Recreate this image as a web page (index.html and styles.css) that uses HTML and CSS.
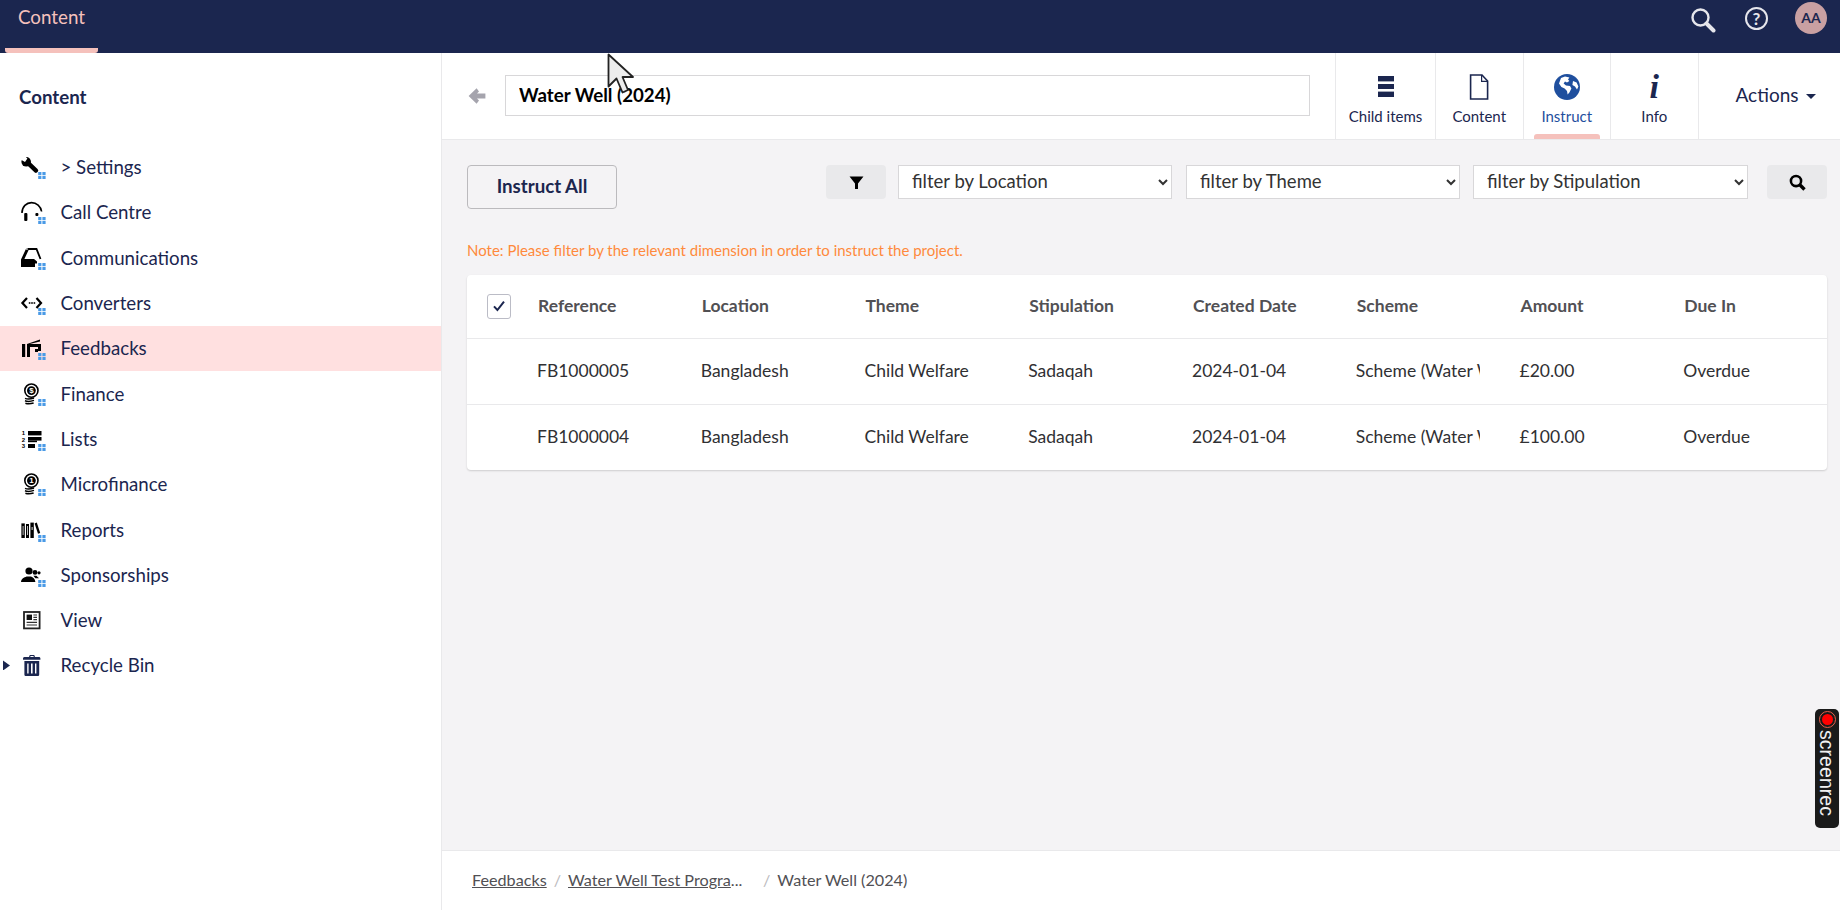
FILE: index.html
```html
<!DOCTYPE html>
<html lang="en">
<head>
    <meta charset="UTF-8">
    <title>Water Well (2024) - Content</title>
    <link rel="stylesheet" href="styles.css">
</head>
<body>
    <svg class="sprite" aria-hidden="true">
        <symbol id="dots" viewBox="0 0 26 24">
            <rect x="18.2" y="17" width="3.2" height="3.2" fill="#4a9ae6"/>
            <rect x="22.4" y="17" width="3.2" height="3.2" fill="#4a9ae6"/>
            <rect x="18.2" y="21" width="3.2" height="3" fill="#4a9ae6"/>
            <rect x="22.4" y="21" width="3.2" height="3" fill="#4a9ae6"/>
        </symbol>
    </svg>

    <header class="topbar">
        <div class="topbar-tab">Content</div>
        <div class="topbar-tools">
            <svg class="tool-search" viewBox="0 0 26 26" fill="none" stroke="#e6e6ec">
                <circle cx="10.5" cy="10.5" r="8" stroke-width="2.4"/>
                <path d="M16.5 16.5L23.5 23.5" stroke-width="4" stroke-linecap="round"/>
            </svg>
            <div class="tool-help">?</div>
            <div class="tool-avatar">AA</div>
        </div>
    </header>

    <div class="layout">
        <aside class="sidebar">
            <h2 class="sidebar-title">Content</h2>
            <ul class="tree">
                <li class="tree-item">
                    <span class="tree-caret"></span>
                    <svg class="tree-icon" viewBox="0 0 26 24">
                        <circle cx="6.2" cy="6.8" r="4.8"/>
                        <path d="M6.6 6.6L16 15.6" stroke="#000" stroke-width="4.4" stroke-linecap="round"/>
                        <path d="M0.6 4.4L5 7L7.4 3.4L4.4 0.6Z" fill="#fff"/>
                        <use href="#dots"/>
                    </svg>
                    <span class="tree-label">&gt; Settings</span>
                </li>
                <li class="tree-item">
                    <span class="tree-caret"></span>
                    <svg class="tree-icon" viewBox="0 0 26 24">
                        <path d="M2 13C2 6.5 6.5 2.6 11.5 2.6C16.5 2.6 20.8 6.2 21.6 11.5" fill="none" stroke="#000" stroke-width="1.6"/>
                        <rect x="4.2" y="13" width="3.2" height="8" rx="1"/>
                        <rect x="15.4" y="13" width="3" height="3" rx="1"/>
                        <use href="#dots"/>
                    </svg>
                    <span class="tree-label">Call Centre</span>
                </li>
                <li class="tree-item">
                    <span class="tree-caret"></span>
                    <svg class="tree-icon" viewBox="0 0 26 24">
                        <path d="M7.5 3H16.5L20.5 13" fill="none" stroke="#000" stroke-width="1.8"/>
                        <path d="M6.4 2L1 13.5V21H15V17.5H17V15.5L14 13H4.4L8.6 4H6.4Z"/>
                        <use href="#dots"/>
                    </svg>
                    <span class="tree-label">Communications</span>
                </li>
                <li class="tree-item">
                    <span class="tree-caret"></span>
                    <svg class="tree-icon" viewBox="0 0 26 24">
                        <path d="M7 7L2.4 12L7 17M16.5 7L21 12L16.5 17" fill="none" stroke="#000" stroke-width="2.2"/>
                        <rect x="8.8" y="11.2" width="1.6" height="1.6"/>
                        <rect x="11.2" y="11.2" width="1.6" height="1.6"/>
                        <rect x="13.6" y="11.2" width="1.6" height="1.6"/>
                        <use href="#dots"/>
                    </svg>
                    <span class="tree-label">Converters</span>
                </li>
                <li class="tree-item is-active">
                    <span class="tree-caret"></span>
                    <svg class="tree-icon" viewBox="0 0 26 24">
                        <rect x="2" y="8" width="3.2" height="13"/>
                        <path d="M7 21V8L20 3.5V5.4L9.6 8H21V15H18V11H10V21Z"/>
                        <rect x="15" y="13" width="3" height="3"/>
                        <use href="#dots"/>
                    </svg>
                    <span class="tree-label">Feedbacks</span>
                </li>
                <li class="tree-item">
                    <span class="tree-caret"></span>
                    <svg class="tree-icon" viewBox="0 0 26 24">
                        <circle cx="11.4" cy="8.6" r="6.6" fill="#fff" stroke="#000" stroke-width="1.6"/>
                        <circle cx="11.4" cy="8.6" r="4.4"/>
                        <text x="11.4" y="11.4" class="icon-num">$</text>
                        <path d="M5 16.4C8 17.6 11 17 14 16M5 18.8C8 20 11 19.4 14 18.4M5.4 21.2C8 22.2 11 21.8 13.6 21" fill="none" stroke="#000" stroke-width="1.5"/>
                        <use href="#dots"/>
                    </svg>
                    <span class="tree-label">Finance</span>
                </li>
                <li class="tree-item">
                    <span class="tree-caret"></span>
                    <svg class="tree-icon" viewBox="0 0 26 24">
                        <text x="3.5" y="8.4" class="icon-digit">1</text>
                        <text x="3.5" y="14.6" class="icon-digit">2</text>
                        <text x="3.5" y="20.6" class="icon-digit">3</text>
                        <rect x="8" y="4" width="13.5" height="4.4"/>
                        <rect x="8" y="10" width="13.5" height="3.6"/>
                        <rect x="8" y="13.6" width="9" height="1.6"/>
                        <rect x="8" y="17" width="7" height="4"/>
                        <use href="#dots"/>
                    </svg>
                    <span class="tree-label">Lists</span>
                </li>
                <li class="tree-item">
                    <span class="tree-caret"></span>
                    <svg class="tree-icon" viewBox="0 0 26 24">
                        <circle cx="11.4" cy="8.6" r="6.6" fill="#fff" stroke="#000" stroke-width="1.6"/>
                        <circle cx="11.4" cy="8.6" r="4.4"/>
                        <text x="11.4" y="11.4" class="icon-num">1</text>
                        <path d="M5 16.4C8 17.6 11 17 14 16M5 18.8C8 20 11 19.4 14 18.4M5.4 21.2C8 22.2 11 21.8 13.6 21" fill="none" stroke="#000" stroke-width="1.5"/>
                        <use href="#dots"/>
                    </svg>
                    <span class="tree-label">Microfinance</span>
                </li>
                <li class="tree-item">
                    <span class="tree-caret"></span>
                    <svg class="tree-icon" viewBox="0 0 26 24">
                        <rect x="1.4" y="5.4" width="3.4" height="14.6"/>
                        <rect x="2.6" y="8" width="1" height="9" fill="#bbb"/>
                        <rect x="6" y="6" width="3" height="14"/>
                        <rect x="7" y="8" width="1" height="9" fill="#bbb"/>
                        <rect x="10.4" y="4.6" width="3.4" height="15.4"/>
                        <rect x="11.6" y="9" width="1" height="3" fill="#ddd"/>
                        <path d="M14.6 5.4L16.8 4.6L20.2 15L18 15.8Z"/>
                        <use href="#dots"/>
                    </svg>
                    <span class="tree-label">Reports</span>
                </li>
                <li class="tree-item">
                    <span class="tree-caret"></span>
                    <svg class="tree-icon" viewBox="0 0 26 24">
                        <circle cx="9" cy="8" r="3.6"/>
                        <path d="M1 19C1.4 15.4 4 14.8 6.6 13.6H11C13 14.4 15 15.6 15.4 19Z"/>
                        <circle cx="15" cy="9.4" r="2.4"/>
                        <path d="M13.4 12.8H16.4L19 15.2H15.4Z"/>
                        <circle cx="19" cy="9.8" r="1.6"/>
                        <use href="#dots"/>
                    </svg>
                    <span class="tree-label">Sponsorships</span>
                </li>
                <li class="tree-item">
                    <span class="tree-caret"></span>
                    <svg class="tree-icon" viewBox="0 0 26 24">
                        <rect x="4" y="4" width="15.6" height="16.4" fill="#fff" stroke="#222" stroke-width="1.8"/>
                        <rect x="6.6" y="6.6" width="5.4" height="5.4" fill="#111"/>
                        <path d="M13.4 7H17M13.4 9.4H17M13.4 11.6H17M6.6 14.4H17M6.6 17H17" stroke="#333" stroke-width="1.1"/>
                    </svg>
                    <span class="tree-label">View</span>
                </li>
                <li class="tree-item">
                    <span class="tree-caret is-closed"></span>
                    <svg class="tree-icon is-navy" viewBox="0 0 26 24">
                        <path d="M3 5.6C3 4.4 4 4 5.4 4H9L9.8 2H14.2L15 4H18.6C20 4 20.4 4.6 20.4 5.6V6.8H3ZM10.6 3L10.2 4H13.8L13.4 3Z" fill-rule="evenodd"/>
                        <path d="M4.4 8H19.2V21.4C19.2 22.4 18.6 23 17.6 23H6C5 23 4.4 22.4 4.4 21.4ZM7.2 10.4V20.6H8.6V10.4ZM11 10.4V20.6H12.6V10.4ZM15 10.4V20.6H16.4V10.4Z" fill-rule="evenodd"/>
                    </svg>
                    <span class="tree-label">Recycle Bin</span>
                </li>
            </ul>
        </aside>

        <main class="editor">
            <div class="editor-head">
                <svg class="back-arrow" viewBox="0 0 18 16">
                    <path d="M8.6 0.2L0.6 8L8.6 15.8L11 12.6L9 10.6H17.4V5.4H9L11 3.4Z"/>
                </svg>
                <input class="name-input" type="text" value="Water Well (2024)">
                <nav class="app-tabs">
                    <div class="app-tab">
                        <svg class="app-tab-icon" viewBox="0 0 26 26">
                            <rect x="5" y="2" width="16" height="5.4"/>
                            <rect x="5" y="10" width="16" height="5"/>
                            <rect x="5" y="17.6" width="16" height="5.4"/>
                        </svg>
                        <span>Child items</span>
                    </div>
                    <div class="app-tab">
                        <svg class="app-tab-icon" viewBox="0 0 26 26">
                            <path d="M4.6 1H16L21.6 7V25H4.6Z" fill="none" stroke="#1b264f" stroke-width="1.6"/>
                            <path d="M15.6 1V7.4H21.6" fill="none" stroke="#1b264f" stroke-width="1.2"/>
                        </svg>
                        <span>Content</span>
                    </div>
                    <div class="app-tab is-active">
                        <svg class="app-tab-icon" viewBox="0 0 26 26">
                            <circle cx="13" cy="13" r="13" fill="#1f4f9e"/>
                            <path d="M7 4L11 2.6L15.4 3.4L14 5.4L15.4 7L13 8.6L11 7.6L9.6 9.4L12 11.4L16 12L17.4 14.6L15.4 18.4L13.6 20.6L13 17L10.6 14.6L7.4 13L5 9.6Z" fill="#fff"/>
                            <path d="M19 7L22.6 8.6L24.4 12.6L23 15.6L21 12.6L18.4 11Z" fill="#fff"/>
                        </svg>
                        <span>Instruct</span>
                    </div>
                    <div class="app-tab">
                        <span class="info-glyph">i</span>
                        <span>Info</span>
                    </div>
                </nav>
                <div class="actions">Actions<span class="actions-caret"></span></div>
            </div>

            <div class="editor-body">
                <div class="toolbar">
                    <button class="btn-instruct">Instruct All</button>
                    <div class="filters">
                        <button class="btn-icon">
                            <svg viewBox="0 0 14 14" class="btn-glyph"><path d="M0.5 1.5H13.5L8.4 8V13H5.6V8Z"/></svg>
                        </button>
                        <select class="filter-select"><option>filter by Location</option></select>
                        <select class="filter-select filter-theme"><option>filter by Theme</option></select>
                        <select class="filter-select filter-stip"><option>filter by Stipulation</option></select>
                        <button class="btn-icon btn-search">
                            <svg viewBox="0 0 16 16" class="btn-glyph" fill="none" stroke="#000">
                                <circle cx="6.6" cy="6.6" r="4.8" stroke-width="2.4"/>
                                <path d="M10.4 10.4L14.6 14.6" stroke-width="3.2"/>
                            </svg>
                        </button>
                    </div>
                </div>

                <p class="note">Note: Please filter by the relevant dimension in order to instruct the project.</p>

                <table class="results">
                    <thead>
                        <tr>
                            <th class="col-check"><span class="checkbox"><svg viewBox="0 0 14 14" fill="none" stroke="#1b264f" stroke-width="2"><path d="M2 7.4L5.4 11L12 2.6"/></svg></span></th>
                            <th>Reference</th>
                            <th>Location</th>
                            <th>Theme</th>
                            <th>Stipulation</th>
                            <th>Created Date</th>
                            <th>Scheme</th>
                            <th>Amount</th>
                            <th class="col-last">Due In</th>
                        </tr>
                    </thead>
                    <tbody>
                        <tr>
                            <td></td>
                            <td>FB1000005</td>
                            <td>Bangladesh</td>
                            <td>Child Welfare</td>
                            <td>Sadaqah</td>
                            <td>2024-01-04</td>
                            <td><div class="cell-clip">Scheme (Water Well Test Programme)</div></td>
                            <td>£20.00</td>
                            <td>Overdue</td>
                        </tr>
                        <tr>
                            <td></td>
                            <td>FB1000004</td>
                            <td>Bangladesh</td>
                            <td>Child Welfare</td>
                            <td>Sadaqah</td>
                            <td>2024-01-04</td>
                            <td><div class="cell-clip">Scheme (Water Well Test Programme)</div></td>
                            <td>£100.00</td>
                            <td>Overdue</td>
                        </tr>
                    </tbody>
                </table>
            </div>

            <footer class="crumbs">
                <a class="crumb-link">Feedbacks</a>
                <span class="crumb-sep">/</span>
                <span class="crumb-long"><a class="crumb-link">Water Well Test Progra</a>...</span>
                <span class="crumb-sep">/</span>
                <span>Water Well (2024)</span>
            </footer>
        </main>
    </div>

    <!-- recording overlays -->
    <div class="screenrec">
        <span class="screenrec-dot"></span>
        <span class="screenrec-text">screenrec</span>
    </div>
    <svg class="cursor" viewBox="0 0 28 42">
        <path d="M1.5 1.5L1.5 33.5L9.5 25.5L15.5 39.5L21 37L15.5 24L26 24Z" fill="#ececec" stroke="#222" stroke-width="1.8" stroke-linejoin="round"/>
    </svg>
</body>
</html>
```

FILE: styles.css
```css
* {
    box-sizing: border-box;
}

html, body {
    height: 100%;
}

body {
    margin: 0;
    height: 910px;
    overflow: hidden;
    display: flex;
    flex-direction: column;
    font-family: Lato, "Open Sans", sans-serif;
    color: #1b264f;
    background: #fff;
}

.sprite {
    display: none;
}

/* top bar */
.topbar {
    height: 53px;
    flex: none;
    display: flex;
    justify-content: space-between;
    background: #1b264f;
}

.topbar-tab {
    width: 93px;
    height: 53px;
    margin-left: 5px;
    padding: 5px 0 0 13px;
    font-size: 18.8px;
    line-height: 24px;
    color: #f5c1bc;
    border-bottom: 5px solid #f5c1bc;
    border-radius: 0 0 3px 3px;
}

.topbar-tools {
    display: flex;
    align-items: flex-start;
    padding: 2px 13px 0 0;
}

.tool-search {
    width: 26px;
    height: 26px;
    margin: 5px 0 0 0;
}

.tool-help {
    width: 23px;
    height: 23px;
    margin: 5px 0 0 29px;
    border: 2px solid #e6e6ec;
    border-radius: 50%;
    color: #e6e6ec;
    font-size: 17px;
    font-weight: 700;
    line-height: 19px;
    text-align: center;
}

.tool-avatar {
    width: 32px;
    height: 32px;
    margin-left: 27px;
    border-radius: 50%;
    background: #c9a0a2;
    color: #1b264f;
    font-size: 14px;
    font-weight: 700;
    line-height: 32px;
    text-align: center;
}

.layout {
    flex: 1;
    display: flex;
    min-height: 0;
}

/* sidebar */
.sidebar {
    width: 442px;
    flex: none;
    border-right: 1px solid #e9e9eb;
    background: #fff;
}

.sidebar-title {
    margin: 0;
    padding: 32px 0 0 19px;
    font-size: 18.7px;
    font-weight: 700;
    line-height: 24px;
}

.tree {
    list-style: none;
    margin: 35.5px 0 0;
    padding: 0;
}

.tree-item {
    height: 45.3px;
    display: flex;
    align-items: center;
    padding-left: 3px;
    font-size: 18.7px;
}

.tree-item.is-active {
    background: #ffe0e0;
}

.tree-caret {
    width: 7px;
    height: 10px;
    margin-right: 10px;
    flex: none;
}

.tree-caret.is-closed {
    background: #1b264f;
    clip-path: polygon(0 0, 100% 50%, 0 100%);
}

.tree-icon {
    width: 26px;
    height: 24px;
    flex: none;
    fill: #000;
}

.tree-icon.is-navy {
    fill: #1b264f;
}

.tree-label {
    margin-left: 14.5px;
}

.icon-num {
    font: 700 8px "Liberation Sans", sans-serif;
    text-anchor: middle;
    fill: #fff;
}

.icon-digit {
    font: 700 6px "Liberation Sans", sans-serif;
    text-anchor: middle;
    fill: #000;
}

/* editor */
.editor {
    flex: 1;
    min-width: 0;
    display: flex;
    flex-direction: column;
    background: #f4f3f5;
}

.editor-head {
    height: 87px;
    flex: none;
    display: flex;
    align-items: stretch;
    background: #fff;
    border-bottom: 1px solid #e9e9eb;
}

.back-arrow {
    width: 18px;
    height: 16px;
    margin: 35px 19px 0 26px;
    flex: none;
    fill: #a5a4ad;
}

.name-input {
    width: 805px;
    height: 41px;
    margin: 22px 25px 0 0;
    padding: 0 13px 2px;
    border: 1px solid #d8d7d9;
    font-family: inherit;
    font-size: 18.7px;
    font-weight: 700;
    color: #000;
    outline: none;
}

.app-tabs {
    display: flex;
    border-left: 1px solid #e9e9eb;
}

.app-tab {
    position: relative;
    width: 87.5px;
    display: flex;
    flex-direction: column;
    align-items: center;
    padding-top: 21px;
    border-right: 1px solid #e9e9eb;
    font-size: 15px;
    color: #1b264f;
}

.app-tab:first-child {
    width: 100px;
}

.app-tab > span:last-child {
    margin-top: 6px;
    line-height: 20px;
}

.app-tab.is-active {
    color: #1f4f9e;
}

/* small pink marker under the active tab */
.app-tab.is-active::after {
    content: "";
    position: absolute;
    left: 10px;
    right: 10px;
    bottom: 0;
    height: 5px;
    border-radius: 3px 3px 0 0;
    background: #f5c1bc;
}

.app-tab-icon {
    width: 26px;
    height: 26px;
    fill: #1b264f;
}

.info-glyph {
    height: 26px;
    font: italic 700 34px/26px "Liberation Serif", serif;
    color: #1b264f;
}

.actions {
    flex: 1;
    padding: 30px 0 0 37px;
    font-size: 19px;
    line-height: 24px;
}

.actions-caret {
    display: inline-block;
    margin-left: 7px;
    vertical-align: 3px;
    border-left: 5px solid transparent;
    border-right: 5px solid transparent;
    border-top: 5px solid #1b264f;
}

.editor-body {
    flex: 1;
    min-height: 0;
    padding: 25px 13px 0 25px;
}

.toolbar {
    display: flex;
    justify-content: space-between;
    align-items: flex-start;
}

.btn-instruct {
    width: 150px;
    height: 44px;
    padding: 0 0 2px;
    border: 1px solid #bbbabd;
    border-radius: 4px;
    background: transparent;
    font-family: inherit;
    font-size: 18.7px;
    font-weight: 700;
    color: #1b264f;
}

.filters {
    display: flex;
}

.btn-icon {
    width: 60px;
    height: 34px;
    padding: 0;
    margin-right: 12px;
    border: none;
    border-radius: 4px;
    background: #e9e9eb;
    display: flex;
    align-items: center;
    justify-content: center;
}

.btn-glyph {
    width: 15px;
    height: 15px;
    fill: #000;
}

.btn-search {
    margin: 0 0 0 19px;
}

.btn-search .btn-glyph {
    width: 17px;
    height: 17px;
    fill: none;
}

.filter-select {
    width: 274px;
    height: 34px;
    padding: 0 9px 2px;
    border: 1px solid #d8d7d9;
    border-radius: 0;
    background: #fff;
    font-family: inherit;
    font-size: 18.5px;
    color: #333;
}

.filter-theme {
    margin-left: 14px;
}

.filter-stip {
    width: 275px;
    margin-left: 13px;
}

.note {
    margin: 31px 0 0;
    font-size: 15px;
    line-height: 20px;
    color: #ff8a3c;
}

.results {
    width: 1360px;
    margin-top: 15px;
    border-collapse: collapse;
    table-layout: fixed;
    background: #fff;
    border-radius: 4px;
    box-shadow: 0 1px 2px rgba(0, 0, 0, 0.16);
}

.results th {
    width: 163.75px;
    height: 63px;
    padding: 0 0 2px 1px;
    border-bottom: 1px solid #e9e9eb;
    text-align: left;
    font-size: 17.5px;
    font-weight: 700;
    color: #515054;
}

.results .col-check {
    width: 70px;
    padding: 0 0 0 20px;
}

.results .col-last {
    width: auto;
}

.results td {
    height: 66px;
    padding: 0 0 2px;
    border-bottom: 1px solid #e9e9eb;
    font-size: 17.5px;
    color: #303033;
}

.results tr:last-child td {
    border-bottom: none;
}

.cell-clip {
    width: 124px;
    overflow: hidden;
    white-space: nowrap;
}

.checkbox {
    display: flex;
    align-items: center;
    justify-content: center;
    width: 24px;
    height: 25px;
    border: 1px solid #bbbcc6;
    border-radius: 3px;
    background: #fff;
}

.checkbox svg {
    width: 14px;
    height: 14px;
}

.crumbs {
    height: 60px;
    flex: none;
    display: flex;
    align-items: center;
    padding: 0 0 2px 30px;
    background: #fff;
    border-top: 1px solid #e9e9eb;
    font-size: 16.2px;
    color: #515054;
}

.crumb-link {
    text-decoration: underline;
}

.crumb-sep {
    margin: 0 7px;
    color: #bbbabd;
}

.crumb-long {
    width: 188px;
}

/* things recorded on top of the page */
.screenrec {
    position: absolute;
    left: 1815px;
    top: 709px;
    width: 24px;
    height: 119px;
    display: flex;
    flex-direction: column;
    align-items: center;
    padding-top: 3px;
    border-radius: 5px;
    background: #1a1a1a;
}

.screenrec-dot {
    width: 15px;
    height: 15px;
    border-radius: 50%;
    background: #ff0000;
    border: 2px solid #1a1a1a;
    outline: 1px solid #e8604c;
}

.screenrec-text {
    margin-top: 3px;
    writing-mode: vertical-rl;
    font: 19.6px/20px "Liberation Sans", sans-serif;
    color: #f0f0f0;
}

.cursor {
    position: absolute;
    left: 607px;
    top: 53px;
    width: 28px;
    height: 42px;
}
```
